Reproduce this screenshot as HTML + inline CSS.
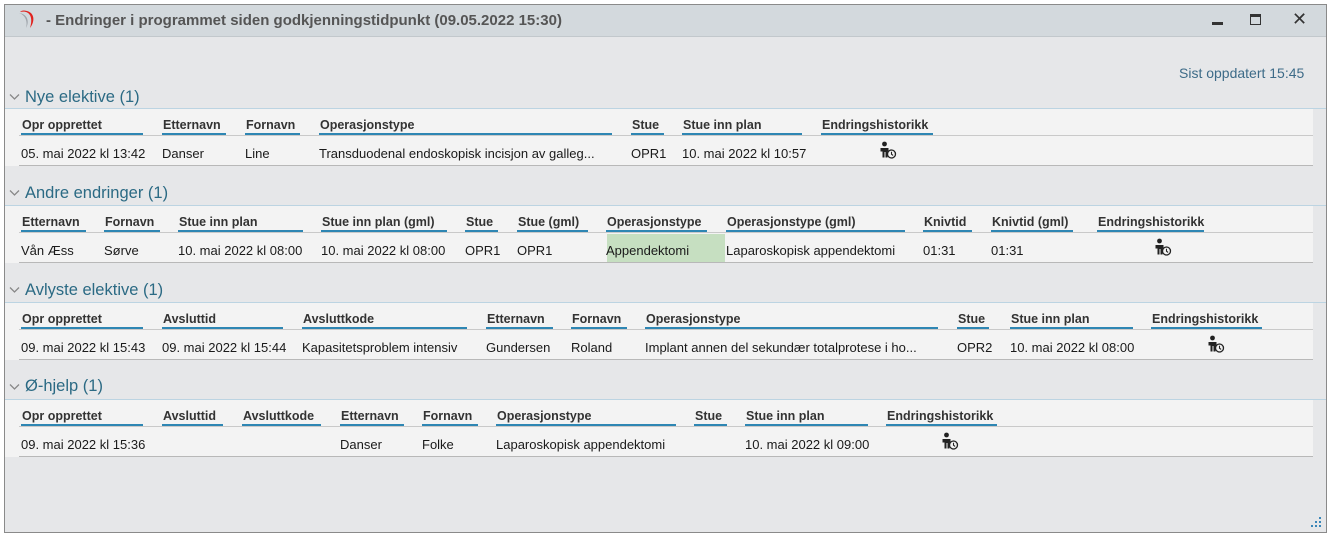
<!DOCTYPE html>
<html><head><meta charset="utf-8"><style>
*{margin:0;padding:0;box-sizing:border-box}
body{width:1331px;height:539px;background:#fff;position:relative;overflow:hidden;font-family:"Liberation Sans",sans-serif;font-size:13px;color:#1a1a1a}
.a{position:absolute;white-space:nowrap}
.win{left:4px;top:4px;width:1323px;height:529px;border:1px solid #8a8a8a;background:#e6e7e9}
.tb{left:5px;top:5px;width:1321px;height:32px;background:#d3d9dd;border-bottom:1px solid #c2c8cc}
.sec{color:#2b6a84;font-size:16.5px}
.tab{background:#f3f3f3}
.h{font-weight:bold;color:#333;font-size:12.5px}
.u{height:2px;background:#2e86b3}
.ln{height:1px;background:#c9c9c9}
.lb{height:1px;background:#bcd4e2}
</style></head><body>
<div class="a win"></div>
<div class="a tb"></div>
<svg class="a" style="left:15px;top:9px" width="24" height="22" viewBox="0 0 24 22"><path d="M5 3 C13 1 19 6 15 19 C21 11 19 2 9 1.5 C7 1.5 6 2 5 3Z" fill="#e0231f"/><path d="M4 4 C10 6 13 12 11 19 C15 12 12 5 4 4Z" fill="#a0a6ac"/></svg>
<div class="a" style="left:46px;top:12px;font-size:15px;font-weight:bold;color:#555">- Endringer i programmet siden godkjenningstidpunkt (09.05.2022 15:30)</div>
<div class="a" style="left:1212px;top:22px;width:11px;height:3px;background:#333"></div>
<div class="a" style="left:1250px;top:14px;width:11px;height:11px;border:1.5px solid #333;border-top-width:3px"></div>
<div class="a" style="left:1292px;top:9px;font-size:18px;color:#333">✕</div>
<div class="a" style="left:1179px;top:65px;font-size:14px;color:#3d6b88">Sist oppdatert 15:45</div>

<div class="a tab" style="left:5px;top:109px;width:1308px;height:57px"></div>
<div class="a lb" style="left:5px;top:108px;width:1321px"></div>
<svg class="a" style="left:9px;top:93px" width="11" height="8"><path d="M1 1.5L5.5 6L10 1.5" stroke="#888" stroke-width="1.3" fill="none"/></svg>
<div class="a sec" style="left:25px;top:88px">Nye elektive (1)</div>

<div class="a tab" style="left:5px;top:206px;width:1308px;height:57px"></div>
<div class="a lb" style="left:5px;top:205px;width:1321px"></div>
<svg class="a" style="left:9px;top:189px" width="11" height="8"><path d="M1 1.5L5.5 6L10 1.5" stroke="#888" stroke-width="1.3" fill="none"/></svg>
<div class="a sec" style="left:25px;top:184px">Andre endringer (1)</div>

<div class="a tab" style="left:5px;top:303px;width:1308px;height:57px"></div>
<div class="a lb" style="left:5px;top:302px;width:1321px"></div>
<svg class="a" style="left:9px;top:286px" width="11" height="8"><path d="M1 1.5L5.5 6L10 1.5" stroke="#888" stroke-width="1.3" fill="none"/></svg>
<div class="a sec" style="left:25px;top:281px">Avlyste elektive (1)</div>

<div class="a tab" style="left:5px;top:400px;width:1308px;height:57px"></div>
<div class="a lb" style="left:5px;top:399px;width:1321px"></div>
<svg class="a" style="left:9px;top:383px" width="11" height="8"><path d="M1 1.5L5.5 6L10 1.5" stroke="#888" stroke-width="1.3" fill="none"/></svg>
<div class="a sec" style="left:25px;top:377px">Ø-hjelp (1)</div>

<div class="a" style="left:607px;top:234px;width:118px;height:28px;background:#c6dfc1"></div>

<div id="g"></div>
<script>
var S=[
 [117,[[21,143,"Opr opprettet","05. mai 2022 kl 13:42"],[162,226,"Etternavn","Danser"],[245,300,"Fornavn","Line"],[319,612,"Operasjonstype","Transduodenal endoskopisk incisjon av galleg..."],[631,664,"Stue","OPR1"],[682,802,"Stue inn plan","10. mai 2022 kl 10:57"],[821,933,"Endringshistorikk",""]],878],
 [214,[[21,86,"Etternavn","Vån Æss"],[104,160,"Fornavn","Sørve"],[178,303,"Stue inn plan","10. mai 2022 kl 08:00"],[321,447,"Stue inn plan (gml)","10. mai 2022 kl 08:00"],[465,498,"Stue","OPR1"],[517,588,"Stue (gml)","OPR1"],[606,707,"Operasjonstype","Appendektomi"],[726,905,"Operasjonstype (gml)","Laparoskopisk appendektomi"],[923,972,"Knivtid","01:31"],[991,1073,"Knivtid (gml)","01:31"],[1097,1204,"Endringshistorikk",""]],1153],
 [311,[[21,143,"Opr opprettet","09. mai 2022 kl 15:43"],[162,283,"Avsluttid","09. mai 2022 kl 15:44"],[302,467,"Avsluttkode","Kapasitetsproblem intensiv"],[486,553,"Etternavn","Gundersen"],[571,627,"Fornavn","Roland"],[645,938,"Operasjonstype","Implant annen del sekundær totalprotese i ho..."],[957,989,"Stue","OPR2"],[1010,1133,"Stue inn plan","10. mai 2022 kl 08:00"],[1151,1262,"Endringshistorikk",""]],1206],
 [408,[[21,143,"Opr opprettet","09. mai 2022 kl 15:36"],[162,223,"Avsluttid",""],[242,321,"Avsluttkode",""],[340,404,"Etternavn","Danser"],[422,478,"Fornavn","Folke"],[496,676,"Operasjonstype","Laparoskopisk appendektomi"],[694,727,"Stue",""],[745,868,"Stue inn plan","10. mai 2022 kl 09:00"],[886,997,"Endringshistorikk",""]],940]
];
var h="";
S.forEach(function(s){var y=s[0];
 h+='<div class="a ln" style="left:19px;top:'+(y+18)+'px;width:1294px"></div>';
 h+='<div class="a ln" style="left:19px;top:'+(y+48)+'px;width:1294px;background:#b8b8b8"></div>';
 s[1].forEach(function(c){
  h+='<div class="a h" style="left:'+(c[0]+1)+'px;top:'+(y+1)+'px">'+c[2]+'</div>';
  h+='<div class="a u" style="left:'+c[0]+'px;top:'+(y+16)+'px;width:'+(c[1]-c[0])+'px"></div>';
  if(c[3])h+='<div class="a" style="left:'+c[0]+'px;top:'+(y+29)+'px">'+c[3]+'</div>';
 });
 var x=s[2];
 h+='<svg class="a" style="left:'+x+'px;top:'+(y+24)+'px" width="20" height="20" viewBox="0 0 20 20"><circle cx="6.5" cy="3" r="2.4" fill="#222"/><path d="M2.5 7h8v3.5H9.5v6H7.5v-5.5h-1v5.5H4.5v-6H2.5z" fill="#222"/><circle cx="13.5" cy="13" r="4" fill="#f3f3f3" stroke="#222" stroke-width="1.3"/><path d="M13.5 10.8v2.4l1.6 1.2" stroke="#222" stroke-width="1.1" fill="none"/></svg>';
});
document.getElementById("g").innerHTML=h;
</script>
<svg class="a" style="left:1309px;top:515px" width="14" height="14"><g fill="#3a86b8"><rect x="10" y="2" width="2" height="2"/><rect x="6" y="6" width="2" height="2"/><rect x="10" y="6" width="2" height="2"/><rect x="2" y="10" width="2" height="2"/><rect x="6" y="10" width="2" height="2"/><rect x="10" y="10" width="2" height="2"/></g></svg>
</body></html>
